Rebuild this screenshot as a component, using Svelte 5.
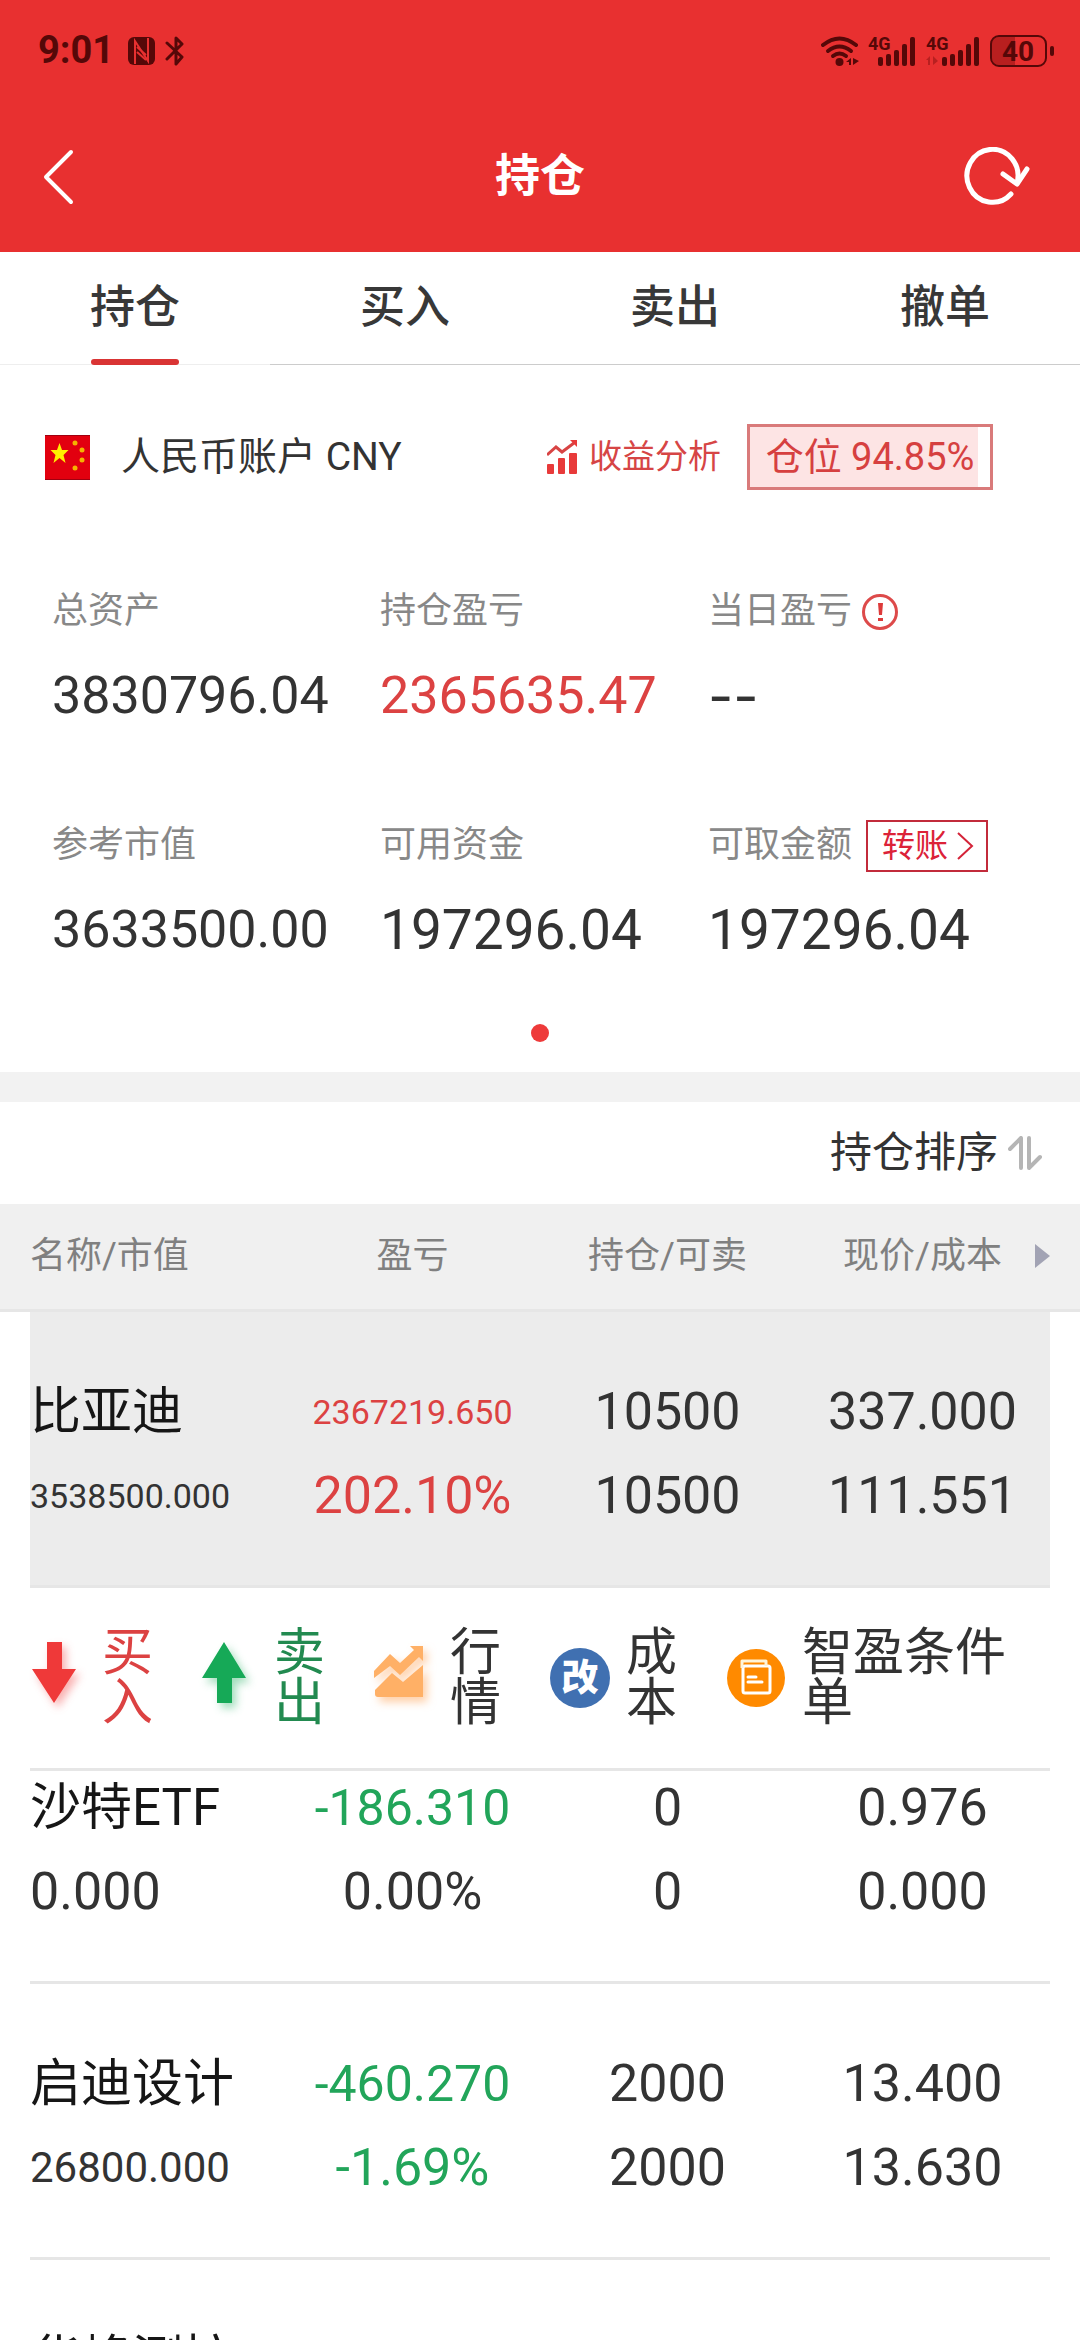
<script>
	const tabs = ['持仓', '买入', '卖出', '撤单'];
	let activeTab = $state(0);

	const position = 94.85;

	const summary = [
		{ label: '总资产', value: '3830796.04' },
		{ label: '持仓盈亏', value: '2365635.47', tone: 'up' },
		{ label: '当日盈亏', value: '--', tone: 'blank', size: 'large', extra: 'info' },
		{ label: '参考市值', value: '3633500.00' },
		{ label: '可用资金', value: '197296.04', size: 'large' },
		{ label: '可取金额', value: '197296.04', size: 'large', extra: 'transfer' }
	];

	const columns = ['名称/市值', '盈亏', '持仓/可卖', '现价/成本'];

	// each cell is [text, classes], two lines per cell
	const holdings = [
		{
			name: '比亚迪',
			cells: [
				[['比亚迪', 'name'], ['3538500.000', 'small']],
				[['2367219.650', 'small up'], ['202.10%', 'up']],
				[['10500', ''], ['10500', '']],
				[['337.000', ''], ['111.551', '']]
			]
		},
		{
			name: '沙特ETF',
			cells: [
				[['沙特ETF', 'name'], ['0.000', '']],
				[['-186.310', 'fit down'], ['0.00%', '']],
				[['0', ''], ['0', '']],
				[['0.976', ''], ['0.000', '']]
			]
		},
		{
			name: '启迪设计',
			cells: [
				[['启迪设计', 'name'], ['26800.000', 'medium']],
				[['-460.270', 'fit down'], ['-1.69%', 'down']],
				[['2000', ''], ['2000', '']],
				[['13.400', ''], ['13.630', '']]
			]
		},
		{
			name: '华峰测控',
			cells: [[['华峰测控', 'name']], [], [], []]
		}
	];
	let selected = $state(0);

	const actions = [
		{ id: 'buy', label: '买入' },
		{ id: 'sell', label: '卖出' },
		{ id: 'quote', label: '行情' },
		{ id: 'cost', label: '成本' },
		{ id: 'smart', label: '智盈条件单' }
	];
</script>

{#snippet signal(faded)}
	<svg class="signal" class:wide={faded} viewBox={faded ? '0 0 54 30' : '5 0 49 30'}>
		<text x={faded ? 0 : 6} y="14">4G</text>
		{#if faded}
			<path class="faint" d="M4 20v9H2v-5H0zM7 20v9l5-4z" />
		{/if}
		<rect x="16" y="21" width="5" height="9" rx="2" />
		<rect x="24" y="18" width="5" height="12" rx="2" />
		<rect x="32" y="14" width="5" height="16" rx="2" />
		<rect x="40" y="8" width="5" height="22" rx="2" />
		<rect x="48" y="1" width="5" height="29" rx="2" />
	</svg>
{/snippet}

<div class="app">
	<header>
		<div class="status">
			<span class="time">9:01</span>
			<svg width="27" height="28" viewBox="0 0 27 28">
				<rect width="27" height="28" rx="6" fill="#550808" />
				<path d="M7 27V4l13 20V1" fill="none" stroke="#e83030" stroke-width="2" />
				<path d="M9 10l9 8M9 15l9 8" stroke="#e83030" stroke-width="2" />
			</svg>
			<svg class="bt" width="20" height="30" viewBox="0 0 20 30">
				<path d="M2 7l15 14-6 7V2l6 6L2 23" />
			</svg>
			<span class="spacer"></span>
			<svg width="38" height="30" viewBox="0 0 38 30">
				<g fill="none" stroke="#550808" stroke-width="4" stroke-linecap="round">
					<path d="M2 9Q18.500-4 35 9" />
					<path d="M7 15q11.500-9 23 0" />
					<path d="M12 20q6.500-5 13 0" />
				</g>
				<circle cx="18.500" cy="26" r="4" fill="#550808" />
				<path d="M30 22v7h-2v-3h-3zM32 22v7l6-4z" fill="#550808" />
			</svg>
			{@render signal(false)}
			{@render signal(true)}
			<svg class="battery" width="64" height="32" viewBox="0 0 64 32">
				<path d="M9 2h16v28H9a7 7 0 0 1-7-7V9a7 7 0 0 1 7-7z" fill="#b81f1f" />
				<rect x="1" y="1" width="55" height="30" rx="8" fill="none" stroke="#550808" stroke-width="2" />
				<rect x="60" y="11" width="4" height="10" rx="2" fill="#550808" />
				<text x="28" y="26" text-anchor="middle">40</text>
			</svg>
		</div>
		<div class="nav">
			<button aria-label="返回">
				<svg width="32" height="58" viewBox="0 0 32 58">
					<path d="M29 4L4 29l25 25" />
				</svg>
			</button>
			<h1>持仓</h1>
			<button class="refresh" aria-label="刷新">
				<svg width="68" height="60" viewBox="0 0 68 60">
					<path d="M49 47A25.500 26.500 0 1 1 55 36" />
					<path d="M41 27l14 10 10-15" />
				</svg>
			</button>
		</div>
	</header>

	<nav class="tabs">
		{#each tabs as tab, i}
			<button class:active={i === activeTab} onclick={() => (activeTab = i)}>{tab}</button>
		{/each}
	</nav>

	<section class="account">
		<div class="account-head">
			<svg width="45" height="45" viewBox="0 0 45 45">
				<rect width="45" height="45" fill="#e2000f" />
				<path d="M0 0h45v1H0zM0 44h45v1H0z" fill="#a00010" />
				<path
					d="M14.500 8l2.500 7h6.500l-5 5 2 8-6-5-6 5 2-8-5-5H12z"
					fill="#fff000"
				/>
				<g fill="#f5b400">
					<circle cx="30" cy="8" r="2.500" />
					<circle cx="37" cy="15" r="2.500" />
					<circle cx="37" cy="25" r="2.500" />
					<circle cx="30" cy="33" r="2.500" />
				</g>
			</svg>
			<span class="account-name">人民币账户 CNY</span>
			<a class="analysis" href="#analysis">
				<svg width="30" height="34" viewBox="0 0 30 34" fill="#e83a3a">
					<rect y="24" width="7" height="10" rx="1" />
					<rect x="11" y="18" width="7" height="16" rx="1" />
					<rect x="22" y="13" width="8" height="21" rx="1" />
					<path d="M0 15l9-8 6 5L27 3" fill="none" stroke="#d84444" stroke-width="3" />
					<path d="M23 0h7v7z" />
				</svg>
				收益分析
			</a>
			<div class="position">
				<div class="fill" style="width: {position}%"></div>
				<span>仓位 {position}%</span>
			</div>
		</div>

		<dl class="summary">
			{#each summary as item}
				<div>
					<dt>
						{item.label}
						{#if item.extra === 'info'}
							<button class="info" aria-label="说明">
								<svg width="36" height="36" viewBox="0 0 36 36">
									<circle cx="18" cy="18" r="16.500" fill="none" stroke="#dd4a4a" stroke-width="3" />
									<path d="M16 9h5l-1 12h-3zM16 24h5v3h-5z" fill="#dd3a3a" />
								</svg>
							</button>
						{:else if item.extra === 'transfer'}
							<button class="transfer">
								转账
								<svg width="18" height="28" viewBox="0 0 18 28">
									<path d="M2 1l14 13L2 27" fill="none" stroke="#d42338" stroke-width="2" />
								</svg>
							</button>
						{/if}
					</dt>
					<dd class="{item.tone ?? ''} {item.size ?? ''}">{item.value}</dd>
				</div>
			{/each}
		</dl>
		<div class="dot"></div>
	</section>

	<div class="sort">
		<button>
			持仓排序
			<svg width="34" height="34" viewBox="0 0 34 34">
				<path d="M2 13L13 2v30M21 2v30l11-11" />
			</svg>
		</button>
	</div>

	<table>
		<thead>
			<tr>
				{#each columns as column, i}
					<th scope="col">
						{column}
						{#if i === columns.length - 1}
							<svg class="more" width="15" height="24" viewBox="0 0 15 24">
								<path d="M0 0l15 12L0 24z" fill="#a2a3b4" />
							</svg>
						{/if}
					</th>
				{/each}
			</tr>
		</thead>
		<tbody>
			{#each holdings as holding, row}
				<tr class="holding" class:selected={row === selected} onclick={() => (selected = row)}>
					{#each holding.cells as cell}
						<td>
							{#each cell as [text, tone]}
								<span class={tone}>{text}</span>
							{/each}
						</td>
					{/each}
				</tr>
				{#if row === selected}
					<tr class="actions">
						<td colspan="4">
							{#each actions as action}
								<button class={action.id}>
									<svg width="60" height="72" viewBox="0 0 60 72">
										{#if action.id === 'buy'}
											<path d="M17 0h15v27h14L24 61 2 27h15z" fill="#ef3939" />
										{:else if action.id === 'sell'}
											<path d="M22 0l22 36H30v25H15V36H0z" fill="#16a957" />
										{:else if action.id === 'quote'}
											<path
												d="M0 29l16-17 10 9 14-13-4-4h13v15l-4-4-19 18-10-9L0 36zM1 48l17-17 11 9 20-17v32H4q-3 0-3-3z"
												fill="#ffb066"
											/>
										{:else if action.id === 'cost'}
											<circle cx="30" cy="36" r="30" fill="#4070b1" />
											<text x="30" y="49" text-anchor="middle">改</text>
										{:else}
											<circle cx="30" cy="36" r="29" fill="#ff8a00" />
											<g fill="none" stroke="#fff" stroke-width="3">
												<rect x="17" y="24" width="27" height="27" rx="2" />
												<path d="M16 26v-7h24v5" stroke="#fff4d8" stroke-linejoin="round" />
												<path d="M22 35h8M22 40h14" stroke-linecap="round" />
											</g>
										{/if}
									</svg>
									<span>{action.label}</span>
								</button>
							{/each}
						</td>
					</tr>
				{/if}
			{/each}
		</tbody>
	</table>
</div>

<style>
	:global(body) {
		margin: 0;
		background: #fff;
	}

	.app {
		height: 100vh;
		overflow: hidden;
		color: #333;
		background: #fff;
		font-family: Roboto, 'Noto Sans CJK SC', sans-serif;
		line-height: 1.2;
	}

	button {
		padding: 0;
		border: none;
		background: none;
		color: inherit;
		font: inherit;
		cursor: pointer;
	}

	svg {
		display: block;
		flex: none;
	}

	.up {
		color: #dc4242;
	}

	.down {
		color: #22a55a;
	}

	/* ===== Header ===== */
	header {
		background: #e83030;
	}

	.status {
		display: flex;
		align-items: center;
		height: 102px;
		padding: 0 26px 0 38px;
		color: #550808;
	}

	.time {
		margin-right: 14px;
		font-size: 38px;
		font-weight: 700;
	}

	.bt {
		margin-left: 10px;
		fill: none;
		stroke: #550808;
		stroke-width: 3;
		stroke-linejoin: round;
		stroke-linecap: round;
	}

	.spacer {
		flex: 1;
	}

	.signal {
		width: 49px;
		height: 30px;
		margin-left: 8px;
		fill: #550808;
		font-size: 18px;
		font-weight: 700;
		overflow: visible;
	}

	.signal.wide {
		width: 54px;
		margin-left: 10px;
	}

	.faint {
		fill: #b82020;
	}

	.battery {
		margin-left: 10px;
		fill: #550808;
		font-size: 28px;
		font-weight: 700;
	}

	.nav {
		display: grid;
		grid-template-columns: 1fr auto 1fr;
		align-items: center;
		height: 150px;
		padding: 0 50px 0 42px;
		color: #fff;
	}

	.nav button {
		display: flex;
		width: 68px;
	}

	.nav path {
		fill: none;
		stroke: #fff;
		stroke-width: 4;
		stroke-linecap: round;
		stroke-linejoin: round;
	}

	.nav .refresh {
		justify-self: end;
	}

	.refresh path {
		stroke-width: 5;
	}

	h1 {
		margin: 0 0 0 8px;
		font-size: 45px;
		font-weight: 700;
	}

	/* ===== Tabs ===== */
	.tabs {
		display: grid;
		grid-template-columns: repeat(4, 1fr);
	}

	.tabs button {
		position: relative;
		height: 113px;
		border-bottom: 1px solid #ccc;
		color: #383838;
		font-size: 45px;
		font-weight: 500;
	}

	.tabs .active {
		border-bottom-color: #eee;
	}

	.tabs .active::after {
		content: '';
		position: absolute;
		left: 50%;
		bottom: -1px;
		width: 88px;
		height: 6px;
		margin-left: -44px;
		border-radius: 3px;
		background: #d93434;
	}

	/* ===== Account ===== */
	.account {
		border-bottom: 30px solid #f2f2f2;
	}

	.account-head {
		display: flex;
		align-items: center;
		padding: 59px 87px 0 45px;
	}

	.account-name {
		flex: 1;
		margin-left: 31px;
		font-size: 39px;
	}

	.analysis {
		display: flex;
		align-items: center;
		gap: 12px;
		margin-right: 26px;
		color: #d64545;
		font-size: 33px;
		text-decoration: none;
	}

	.position {
		position: relative;
		width: 240px;
		height: 60px;
		border: 3px solid #d97a7a;
		color: #d64040;
		font-size: 38px;
		line-height: 60px;
		text-align: center;
		white-space: nowrap;
	}

	.fill {
		position: absolute;
		inset: 0 auto 0 0;
		background: #fde4e4;
	}

	.position span {
		position: relative;
	}

	.summary {
		display: grid;
		grid-template-columns: repeat(3, 1fr);
		row-gap: 66px;
		margin: 0;
		padding: 86px 44px 0 52px;
	}

	dt {
		display: flex;
		align-items: center;
		height: 72px;
		color: #888;
		font-size: 36px;
	}

	dd {
		height: 96px;
		margin: 0;
		font-size: 52px;
		line-height: 96px;
	}

	.large {
		font-size: 55px;
	}

	.blank {
		font-family: Inter, sans-serif;
	}

	.info {
		margin-left: 10px;
	}

	.transfer {
		display: flex;
		align-items: center;
		gap: 8px;
		height: 52px;
		margin-left: 14px;
		padding: 0 12px 0 14px;
		border: 2px solid #c22b3b;
		color: #dc2238;
		font-size: 33px;
	}

	.dot {
		width: 18px;
		height: 18px;
		margin: 46px auto 30px;
		border-radius: 50%;
		background: #ee3a3a;
	}

	/* ===== Holdings ===== */
	.sort {
		display: flex;
		justify-content: flex-end;
		height: 102px;
		padding-right: 38px;
	}

	.sort button {
		display: flex;
		align-items: center;
		gap: 10px;
		font-size: 42px;
	}

	.sort path {
		fill: none;
		stroke: #b5b5b5;
		stroke-width: 4;
		stroke-linecap: round;
		stroke-linejoin: round;
	}

	table,
	thead,
	tbody {
		display: block;
	}

	thead tr,
	.holding {
		display: grid;
		grid-template-columns: repeat(4, 1fr);
	}

	thead tr {
		height: 105px;
		padding: 0 30px;
		border-bottom: 3px solid #e6e6e6;
		background: #f0f0f0;
	}

	th {
		position: relative;
		padding: 0;
		color: #808080;
		font-size: 36px;
		font-weight: 400;
		line-height: 104px;
	}

	th:first-child,
	.holding td:first-child {
		text-align: left;
	}

	.more {
		position: absolute;
		top: 40px;
		right: 0;
	}

	.holding {
		height: 273px;
		margin: 0 30px;
		border-bottom: 3px solid #e6e6e6;
	}

	.selected {
		background: #ececec;
	}

	.holding td {
		padding: 58px 0 0;
		text-align: center;
	}

	.holding span {
		display: block;
		height: 84px;
		font-size: 52px;
		line-height: 84px;
		white-space: nowrap;
	}

	.holding .name {
		color: #161616;
		font-size: 51px;
	}

	.holding .fit {
		font-size: 50px;
	}

	.holding .medium {
		font-size: 42px;
	}

	.holding .small {
		font-size: 34px;
	}

	/* the panel covers the top padding of the row below it */
	.actions {
		position: relative;
		display: block;
		margin: 0 30px -63px;
		border-bottom: 3px solid #e6e6e6;
		background: #fff;
	}

	.actions td {
		display: flex;
		align-items: center;
		gap: 49px;
		height: 180px;
		padding: 0;
	}

	.actions button {
		display: flex;
		align-items: center;
		gap: 16px;
		font-size: 51px;
		line-height: 50px;
		text-align: left;
	}

	.actions .buy,
	.actions .sell {
		gap: 12px;
	}

	.actions svg {
		overflow: visible;
	}

	.actions span {
		width: 51px;
	}

	.actions .smart span {
		width: 204px;
	}

	.actions text {
		fill: #fff;
		font-size: 37px;
		font-weight: 900;
	}

	.buy {
		color: #dc4242;
	}

	.sell {
		color: #228a50;
	}

	.buy svg {
		filter: drop-shadow(4px 5px 4px rgba(239, 57, 57, 0.4));
	}

	.sell svg {
		filter: drop-shadow(4px 5px 4px rgba(22, 169, 87, 0.4));
	}

	.quote svg {
		filter: drop-shadow(4px 5px 4px rgba(255, 160, 80, 0.5));
	}
</style>
